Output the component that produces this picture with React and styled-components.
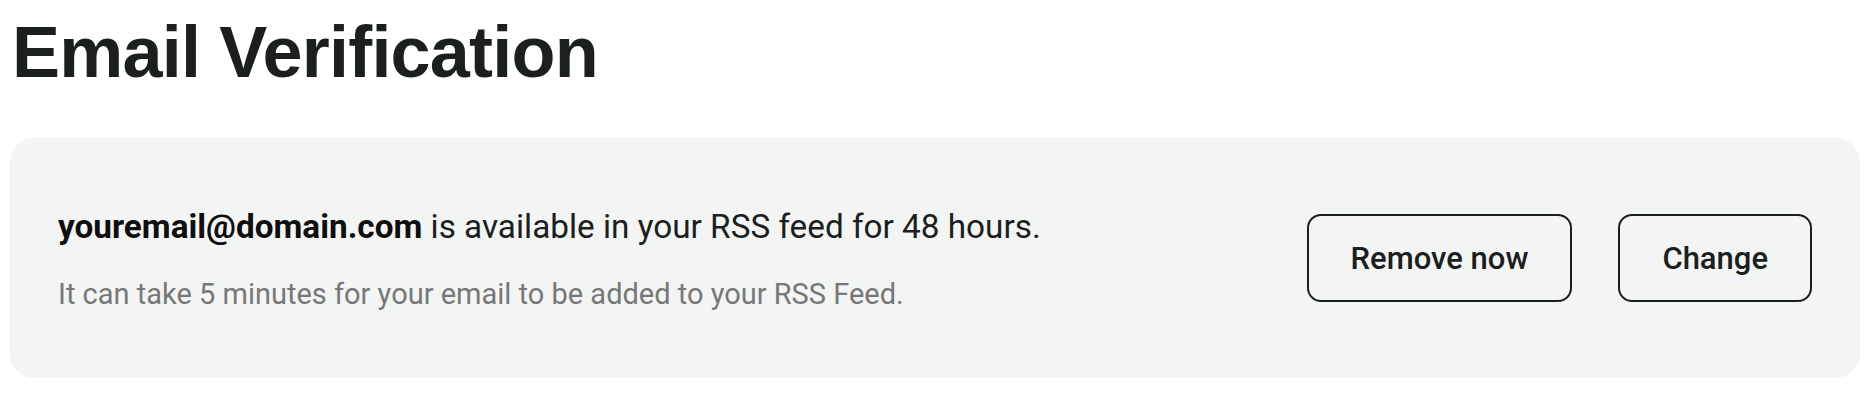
import React from "react";
import styled, { createGlobalStyle } from "styled-components";

const GlobalStyle = createGlobalStyle`
  body {
    margin: 0;
    background: #ffffff;
    font-family: Roboto, "Liberation Sans", sans-serif;
    color: #1b201d;
  }
`;

const Page = styled.main`
  padding: 4px 16px 0 10px;
`;

const Title = styled.h1`
  margin: 0 0 0 2px;
  font-family: "Liberation Sans", Arial, sans-serif;
  font-weight: 700;
  font-size: 72px;
  line-height: 96px;
  letter-spacing: -0.8px;
  color: #1b201d;
`;

const Card = styled.section`
  margin-top: 38px;
  height: 240px;
  box-sizing: border-box;
  padding: 0 48px;
  display: flex;
  align-items: center;
  justify-content: space-between;
  background: #f3f5f4;
  border-radius: 24px;
`;

const Info = styled.div`
  display: flex;
  flex-direction: column;
  gap: 29px;
  margin-top: 2px;
`;

const Lead = styled.p`
  margin: 0;
  font-size: 33.3px;
  line-height: 40px;
  color: #1b201d;
`;

const Email = styled.strong`
  font-weight: 700;
  color: #0e0f0e;
`;

const Note = styled.p`
  margin: 0;
  font-size: 29px;
  line-height: 36px;
  color: #757876;
`;

const Actions = styled.div`
  display: flex;
  gap: 46px;
`;

const Button = styled.button`
  height: 88px;
  padding: 0 42px;
  border: 2px solid #1b201d;
  border-radius: 14px;
  background: transparent;
  font-family: Roboto, "Liberation Sans", sans-serif;
  font-weight: 500;
  font-size: 31px;
  color: #1b201d;
  cursor: pointer;
`;

const App = () => {
  return (
    <Page>
      <GlobalStyle />
      <Title>Email Verification</Title>
      <Card>
        <Info>
          <Lead>
            <Email>youremail@domain.com</Email> is available in your RSS feed for 48 hours.
          </Lead>
          <Note>It can take 5 minutes for your email to be added to your RSS Feed.</Note>
        </Info>
        <Actions>
          <Button>Remove now</Button>
          <Button>Change</Button>
        </Actions>
      </Card>
    </Page>
  );
};

export default App;
